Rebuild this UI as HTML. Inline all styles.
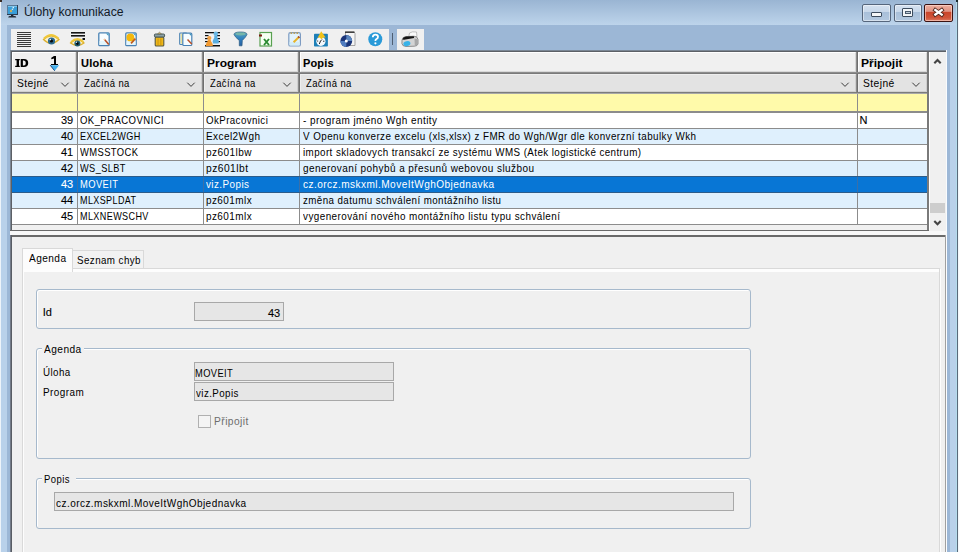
<!DOCTYPE html>
<html><head><meta charset="utf-8">
<style>
*{margin:0;padding:0;box-sizing:border-box}
html,body{width:959px;height:552px;overflow:hidden;background:#b9d1ea;font-family:"Liberation Sans",sans-serif;font-size:11px;color:#000}
.a{position:absolute}
.t{position:absolute;white-space:nowrap;line-height:11px;height:11px;-webkit-text-stroke:0.1px currentColor}
svg{position:absolute;overflow:visible}
</style></head><body>
<div class="a" style="left:0px;top:0px;width:959px;height:552px;background:#b9d1ea"></div>
<div class="a" style="left:0px;top:0px;width:959px;height:25px;background:linear-gradient(#9ab5d3,#bdd4eb)"></div>
<div class="a" style="left:0px;top:0px;width:1px;height:552px;background:#eef4fa"></div>
<div class="a" style="left:957px;top:0px;width:1px;height:552px;background:#5a6a7a"></div>
<div class="a" style="left:958px;top:0px;width:1px;height:552px;background:#f4f8fc"></div>
<div class="a" style="left:956px;top:0px;width:1px;height:552px;background:#b4dcec"></div>
<div class="a" style="left:0px;top:0px;width:2px;height:2px;background:#3a2c24"></div>
<div class="a" style="left:956px;top:0px;width:2px;height:2px;background:#1a2a30"></div>
<svg style="left:0;top:0" width="30" height="25"><rect x="7" y="5" width="11" height="10" fill="#2c3e52"/><rect x="7" y="5" width="10" height="9" fill="#5a7a98"/><rect x="8" y="6" width="9" height="8" fill="#3a9ed8"/><rect x="8" y="6" width="9" height="1" fill="#7cc4ec"/><circle cx="13.3" cy="7.6" r=".8" fill="#e8f4fa"/><circle cx="12.4" cy="9.2" r=".8" fill="#d8ecf4"/><circle cx="11" cy="11" r="1.2" fill="#c8b060"/><rect x="11" y="15" width="2.4" height="1.2" fill="#1e2630"/><path d="M8.2 17.4 Q8.5 16 10 16 H14.5 Q16 16 16.3 17.4 Z" fill="#252d38"/></svg>
<div class="t" style="left:24.2px;top:7px;font-size:12px;color:#121a28;letter-spacing:0.000px;transform:scaleX(1.0148);transform-origin:0 0;-webkit-text-stroke:0px currentColor;-webkit-text-stroke:0">Úlohy komunikace</div>
<div class="a" style="left:862px;top:4px;width:29px;height:18px;border:1px solid #56667c;border-radius:2px;background:linear-gradient(#d6e2f0 0,#c8d8ea 42%,#a8bfd9 43%,#b4c9e0 100%);box-shadow:inset 0 0 0 1px rgba(255,255,255,.45)"></div>
<div class="a" style="left:894px;top:4px;width:28px;height:18px;border:1px solid #56667c;border-radius:2px;background:linear-gradient(#d6e2f0 0,#c8d8ea 42%,#a8bfd9 43%,#b4c9e0 100%);box-shadow:inset 0 0 0 1px rgba(255,255,255,.45)"></div>
<div class="a" style="left:924px;top:4px;width:29px;height:18px;border:1px solid #3a1212;border-radius:2px;background:linear-gradient(#eeb0a0 0,#e09282 40%,#c9442a 44%,#d0553a 80%,#dc7a62 100%);box-shadow:inset 0 0 0 1px rgba(255,220,210,.6)"></div>
<div class="a" style="left:871px;top:12px;width:11px;height:5px;background:#f4f6f8;border:1px solid #3d4c5e;border-radius:1px"></div>
<div class="a" style="left:902px;top:8px;width:11px;height:9px;background:#f4f6f8;border:1px solid #3d4c5e;border-radius:1px"></div>
<div class="a" style="left:904.5px;top:11px;width:6px;height:3px;background:#c0ccd8;border:1px solid #4a5a6c"></div>
<svg style="left:924px;top:4px" width="29" height="18"><path d="M11.3 6 L17.7 10.6 M17.7 6 L11.3 10.6" stroke="#50261c" stroke-width="4" stroke-linecap="square"/><path d="M11.3 6 L17.7 10.6 M17.7 6 L11.3 10.6" stroke="#fff" stroke-width="2.3" stroke-linecap="square"/></svg>
<div class="a" style="left:7px;top:25px;width:943px;height:527px;background:#9cb7d6"></div>
<div class="a" style="left:11px;top:29px;width:378px;height:21px;background:#f0f0f0"></div>
<div class="a" style="left:392px;top:33px;width:1px;height:12px;background:#4e5e72"></div>
<div class="a" style="left:397px;top:29px;width:27px;height:21px;background:#f0f0f0"></div>
<svg style="left:0;top:0" width="430" height="52" shape-rendering="geometricPrecision">
<defs>
<linearGradient id="gfun" x1="0" y1="0" x2="0" y2="1"><stop offset="0" stop-color="#5aa8b8"/><stop offset=".5" stop-color="#2f7fc0"/><stop offset="1" stop-color="#2a5fa0"/></linearGradient>
<radialGradient id="gcd" cx=".5" cy=".5" r=".5"><stop offset="0" stop-color="#fff"/><stop offset=".25" stop-color="#fff"/><stop offset=".3" stop-color="#1c3c8c"/><stop offset="1" stop-color="#142a66"/></radialGradient>
</defs>
<!-- 1 lines -->
<g fill="#3a3a3a">
<rect x="17" y="32" width="14" height="1"/><rect x="17" y="34" width="14" height="1"/><rect x="17" y="36" width="14" height="1"/><rect x="17" y="38" width="14" height="1"/>
<rect x="17" y="40" width="14" height="1"/><rect x="17" y="42" width="14" height="1"/><rect x="17" y="44" width="14" height="1"/><rect x="17" y="46" width="14" height="1"/>
</g>
<!-- 2 eye -->
<g>
<path d="M43.5 39.5 Q51 32 59 39.5 Q51 47 43.5 39.5 Z" fill="#fbf3d0" stroke="#dcb030" stroke-width="1.3"/>
<path d="M44 38.5 Q51 31.5 58.5 38.5" fill="none" stroke="#f0c83a" stroke-width="2"/>
<circle cx="51.5" cy="41" r="3.6" fill="#2d6a8e"/>
<circle cx="51.5" cy="41" r="1.6" fill="#0a0a0a"/>
<circle cx="50.3" cy="39.6" r=".8" fill="#e0f0ff"/>
</g>
<!-- 3 eye + lines -->
<g>
<rect x="71" y="32" width="14" height="1.6" fill="#151515"/>
<rect x="71" y="35" width="14" height="1.6" fill="#151515"/>
<rect x="82.5" y="38" width="2.5" height="2" fill="#151515"/>
<path d="M70.5 43 Q77.5 36.5 84 43 Q77.5 48 70.5 43 Z" fill="#fbf3d0" stroke="#dcb030" stroke-width="1.2"/>
<path d="M71 41.8 Q77.5 36 83.5 41.8" fill="none" stroke="#f0c83a" stroke-width="1.8"/>
<circle cx="77.4" cy="43.6" r="3" fill="#1f5a6e"/>
<circle cx="77.4" cy="43.6" r="1.3" fill="#050505"/>
<circle cx="76.4" cy="42.3" r=".7" fill="#e0f0ff"/>
</g>
<!-- 4 doc pencil -->
<g>
<rect x="98.8" y="32.8" width="10.4" height="12.9" rx="1" fill="#f8fdff" stroke="#4a82b4" stroke-width="1.3"/>
<path d="M99.5 41 H108.5 V45 H99.5 Z" fill="#e4f6fc"/>
<path d="M106 33.5 H108.5 V36 Z" fill="#3a98c0"/>
<path d="M104.3 39.3 L108.8 44.6" stroke="#b85028" stroke-width="1.6"/>
<path d="M104 39 L105 40.1" stroke="#f0c8a0" stroke-width="1.6"/>
</g>
<!-- 5 doc yellow -->
<g>
<rect x="125.8" y="32.8" width="10.4" height="12.9" rx="1" fill="#f8fdff" stroke="#4a82b4" stroke-width="1.3"/>
<path d="M126.5 41 H135.5 V45 H126.5 Z" fill="#e4f6fc"/>
<circle cx="130.4" cy="37.4" r="3.9" fill="#f4b80c"/>
<path d="M133 33.5 H135.5 V36 Z" fill="#3a98c0"/>
<path d="M135.4 38.6 L131 43.4" stroke="#c05a1c" stroke-width="1.7"/>
</g>
<!-- 6 trash -->
<g>
<rect x="155.2" y="37" width="8.6" height="9" rx="1" fill="#efb818" stroke="#5a5a40" stroke-width="1.1"/>
<rect x="154.4" y="34" width="10.2" height="3" rx="1" fill="#8aa0a4" stroke="#4a5a5a" stroke-width="1"/>
<path d="M157.5 34 L159.5 32.2 L161.5 34 Z" fill="#c8b070" stroke="#6a6a50" stroke-width=".6"/>
<rect x="157.6" y="38.5" width=".9" height="6.5" fill="#c89010"/><rect x="160.4" y="38.5" width=".9" height="6.5" fill="#c89010"/>
</g>
<!-- 7 doc copy -->
<g>
<rect x="179.7" y="33" width="7" height="11.5" rx=".8" fill="#f4f6e0" stroke="#4a82b4" stroke-width="1.1"/>
<rect x="181" y="34" width="1" height="9.5" fill="#e8e0a0"/>
<rect x="182.8" y="33.2" width="9" height="12.3" rx="1" fill="#f6fcff" stroke="#4a82b4" stroke-width="1.2"/>
<path d="M189 33.8 H191.2 V36 Z" fill="#3a98c0"/>
<path d="M187.5 39.5 L191.8 44" stroke="#b85028" stroke-width="1.5"/>
</g>
<!-- 8 sort people -->
<g>
<rect x="205" y="32" width="15" height="1.3" fill="#101010"/>
<rect x="205" y="35" width="3.5" height="1.2" fill="#101010"/><rect x="217" y="35" width="3" height="1.2" fill="#101010"/>
<rect x="205" y="38" width="3.5" height="1.2" fill="#101010"/><rect x="217" y="38" width="3" height="1.2" fill="#101010"/>
<rect x="205" y="41" width="3" height="1.2" fill="#101010"/><rect x="217" y="41" width="3" height="1.2" fill="#101010"/>
<rect x="205" y="45" width="15" height="1.5" fill="#101010"/>
<circle cx="215.8" cy="33.8" r="2.3" fill="#6ab8e4"/>
<path d="M214.2 35.8 H217.4 Q216.8 37.5 218 39 Q219.5 41 218.6 43.5 H212.9 Q212 41 213.6 39 Q214.8 37.5 214.2 35.8 Z" fill="#5aaee0"/>
<circle cx="209.3" cy="38" r="2.1" fill="#f5a040"/>
<path d="M207.8 39.8 H210.8 Q210.5 41 211.8 42.5 Q213.2 44 212.8 46 H205.8 Q205.4 44 206.8 42.5 Q208.1 41 207.8 39.8 Z" fill="#f39a30"/>
</g>
<!-- 9 funnel -->
<path d="M234 34.5 Q234 32 240.5 32 Q247 32 247 34.5 Q246 37 242.3 40.5 L242 45.8 L239.3 45.8 L239.3 40.5 Q235 37 234 34.5 Z" fill="url(#gfun)" stroke="#2a5a80" stroke-width=".7"/>
<ellipse cx="240.5" cy="34" rx="5" ry="1.4" fill="#7ab8a8" opacity=".9"/>
<!-- 10 excel -->
<g>
<rect x="260" y="32.5" width="11.5" height="13.5" fill="#f6fff2" stroke="#58a050" stroke-width="1.2"/>
<rect x="259" y="34.5" width="3" height="2" fill="#7a1a10"/>
<path d="M264 39 L269 45 M269 39 L264 45" stroke="#2a8a30" stroke-width="1.9"/>
</g>
<!-- 11 notepad -->
<g>
<rect x="288.8" y="32.6" width="11.6" height="13.4" rx="1.6" fill="#e2f2fb" stroke="#7e9cc2" stroke-width="1.2"/>
<rect x="289.5" y="42" width="10.2" height="3.4" fill="#d2ecf8"/>
<rect x="290.5" y="32.2" width="1.6" height="1.8" fill="#b8a060"/><rect x="293.5" y="32.2" width="1.6" height="1.8" fill="#b8a060"/><rect x="296.5" y="32.2" width="1.6" height="1.8" fill="#b8a060"/>
<path d="M299.2 36.7 L293.6 42.2" stroke="#e8b428" stroke-width="2"/>
<path d="M299.3 36.6 L298.3 37.6" stroke="#9a3a28" stroke-width="2"/>
</g>
<!-- 12 clock -->
<g>
<rect x="314" y="33.8" width="13.9" height="12.7" rx=".8" fill="#1e80b8"/>
<circle cx="320.9" cy="41.3" r="4.6" fill="#f4f8fc"/>
<path d="M320.5 41 L319.3 44 M320.5 41 L322 39.5" stroke="#222" stroke-width="1"/>
<rect x="317" y="40.6" width="1.2" height=".9" fill="#333"/><rect x="323.3" y="40.6" width="1" height="1.4" fill="#333"/>
<path d="M321.2 31.2 L325.7 37.5 L323.2 37.5 L321.5 39.3 L319.5 37.5 L317.6 37.7 Z" fill="#f2c21a"/>
</g>
<!-- 13 cd -->
<g>
<path d="M345.5 32 H354 L355 33.5 V45.5 H345.5 Z" fill="#f4f4f4" stroke="#909090" stroke-width=".8"/>
<rect x="345" y="31.5" width="9.5" height="1.4" fill="#303030"/>
<circle cx="346.3" cy="41" r="5.9" fill="#1a3478"/>
<path d="M346.3 41 L346.3 35.1 A5.9 5.9 0 0 1 352.2 41 Z" fill="#5a86c0"/>
<path d="M346.3 41 L346.3 46.9 A5.9 5.9 0 0 1 340.4 41 Z" fill="#4f7cc0"/>
<circle cx="346.3" cy="41" r="1.5" fill="#fff"/>
</g>
<!-- 14 help -->
<g>
<circle cx="375.3" cy="39.2" r="7" fill="#2a9ad8"/>
<path d="M372.8 37.2 Q372.8 34.6 375.4 34.6 Q378 34.6 378 37 Q378 38.4 376.2 39.3 Q375.4 39.8 375.4 41" fill="none" stroke="#fff" stroke-width="1.8"/>
<circle cx="375.4" cy="43.3" r="1.1" fill="#fff"/>
</g>
<!-- 15 printer -->
<g>
<path d="M408.8 36.5 L409.5 33 Q412 31.2 416.5 32 L417 36.5 Z" fill="#fafafa" stroke="#9a9a9a" stroke-width=".6"/>
<path d="M402 40 Q402.5 37 405.5 36.6 L414 36.2 Q417.6 36.4 418 39.5 L418 44 Q417.5 46 414.5 46.2 L406 46.5 Q402.2 46.3 401.9 43.5 Z" fill="#d4d4d4" stroke="#6a6a6a" stroke-width=".7"/>
<path d="M402.3 39.5 Q403 37 406 36.6 L413.8 36.3 L414.2 38 L404 39.8 Z" fill="#141414"/>
<path d="M414.5 38.5 Q417.5 38.5 417.8 40 L417.8 44 Q417.3 45.6 414.8 45.8 Z" fill="#a8a8a8"/>
<ellipse cx="406.9" cy="43.6" rx="3.6" ry="2.4" transform="rotate(-15 406.9 43.6)" fill="#38b2e8"/>
</g>
</svg>
<div class="a" style="left:10px;top:50px;width:937px;height:181px;background:#f0f0f0"></div>
<div class="a" style="left:10px;top:50px;width:937px;height:1px;background:#7a8694"></div>
<div class="a" style="left:11px;top:51px;width:935px;height:1px;background:#5c6066"></div>
<div class="a" style="left:10px;top:50px;width:1px;height:181px;background:#7a8694"></div>
<div class="a" style="left:11px;top:51px;width:1px;height:180px;background:#5c6066"></div>
<div class="a" style="left:946px;top:50px;width:1px;height:181px;background:#6a6a6a"></div>
<div class="a" style="left:12px;top:52px;width:64px;height:20px;background:#f0f0f0;border-top:1px solid #fff;border-left:1px solid #fff;border-right:1px solid #d6d6d6;border-bottom:1px solid #d8d8d8"></div>
<div class="a" style="left:12px;top:74px;width:64px;height:18px;background:#e3e3e3;border-top:1px solid #eeeeee;border-left:1px solid #eeeeee;border-right:1px solid #cfcfcf;border-bottom:1px solid #d0d0d0"></div>
<div class="a" style="left:76px;top:52px;width:1px;height:42px;background:#8c8c8c"></div>
<div class="a" style="left:77px;top:52px;width:1px;height:42px;background:#6e6e6e"></div>
<div class="a" style="left:78px;top:52px;width:124px;height:20px;background:#f0f0f0;border-top:1px solid #fff;border-left:1px solid #fff;border-right:1px solid #d6d6d6;border-bottom:1px solid #d8d8d8"></div>
<div class="a" style="left:78px;top:74px;width:124px;height:18px;background:#e3e3e3;border-top:1px solid #eeeeee;border-left:1px solid #eeeeee;border-right:1px solid #cfcfcf;border-bottom:1px solid #d0d0d0"></div>
<div class="a" style="left:202px;top:52px;width:1px;height:42px;background:#8c8c8c"></div>
<div class="a" style="left:203px;top:52px;width:1px;height:42px;background:#6e6e6e"></div>
<div class="a" style="left:204px;top:52px;width:94px;height:20px;background:#f0f0f0;border-top:1px solid #fff;border-left:1px solid #fff;border-right:1px solid #d6d6d6;border-bottom:1px solid #d8d8d8"></div>
<div class="a" style="left:204px;top:74px;width:94px;height:18px;background:#e3e3e3;border-top:1px solid #eeeeee;border-left:1px solid #eeeeee;border-right:1px solid #cfcfcf;border-bottom:1px solid #d0d0d0"></div>
<div class="a" style="left:298px;top:52px;width:1px;height:42px;background:#8c8c8c"></div>
<div class="a" style="left:299px;top:52px;width:1px;height:42px;background:#6e6e6e"></div>
<div class="a" style="left:300px;top:52px;width:556px;height:20px;background:#f0f0f0;border-top:1px solid #fff;border-left:1px solid #fff;border-right:1px solid #d6d6d6;border-bottom:1px solid #d8d8d8"></div>
<div class="a" style="left:300px;top:74px;width:556px;height:18px;background:#e3e3e3;border-top:1px solid #eeeeee;border-left:1px solid #eeeeee;border-right:1px solid #cfcfcf;border-bottom:1px solid #d0d0d0"></div>
<div class="a" style="left:856px;top:52px;width:1px;height:42px;background:#8c8c8c"></div>
<div class="a" style="left:857px;top:52px;width:1px;height:42px;background:#6e6e6e"></div>
<div class="a" style="left:858px;top:52px;width:69px;height:20px;background:#f0f0f0;border-top:1px solid #fff;border-left:1px solid #fff;border-right:1px solid #d6d6d6;border-bottom:1px solid #d8d8d8"></div>
<div class="a" style="left:858px;top:74px;width:69px;height:18px;background:#e3e3e3;border-top:1px solid #eeeeee;border-left:1px solid #eeeeee;border-right:1px solid #cfcfcf;border-bottom:1px solid #d0d0d0"></div>
<div class="a" style="left:927px;top:52px;width:1px;height:42px;background:#8c8c8c"></div>
<div class="a" style="left:928px;top:52px;width:1px;height:42px;background:#6e6e6e"></div>
<div class="a" style="left:12px;top:72px;width:917px;height:1px;background:#8c8c8c"></div>
<div class="a" style="left:12px;top:73px;width:917px;height:1px;background:#7a7a7a"></div>
<div class="a" style="left:12px;top:92px;width:917px;height:1px;background:#7c7c7c"></div>
<div class="a" style="left:12px;top:93px;width:917px;height:1px;background:#a8a8a8"></div>
<div class="a" style="left:12px;top:94px;width:915px;height:17px;background:#fffaaa"></div>
<div class="a" style="left:77px;top:94px;width:1px;height:17px;background:#8c8c8c"></div>
<div class="a" style="left:203px;top:94px;width:1px;height:17px;background:#8c8c8c"></div>
<div class="a" style="left:299px;top:94px;width:1px;height:17px;background:#8c8c8c"></div>
<div class="a" style="left:857px;top:94px;width:1px;height:17px;background:#8c8c8c"></div>
<div class="a" style="left:928px;top:94px;width:1px;height:17px;background:#8c8c8c"></div>
<div class="a" style="left:12px;top:111px;width:917px;height:2px;background:#8c8c8c"></div>
<div class="a" style="left:12px;top:113px;width:915px;height:15px;background:#ffffff"></div>
<div class="a" style="left:77px;top:113px;width:1px;height:15px;background:#8c8c8c"></div>
<div class="a" style="left:203px;top:113px;width:1px;height:15px;background:#8c8c8c"></div>
<div class="a" style="left:299px;top:113px;width:1px;height:15px;background:#8c8c8c"></div>
<div class="a" style="left:857px;top:113px;width:1px;height:15px;background:#8c8c8c"></div>
<div class="a" style="left:928px;top:113px;width:1px;height:15px;background:#8c8c8c"></div>
<div class="a" style="left:12px;top:128px;width:915px;height:1px;background:#8c8c8c"></div>
<div class="t" style="left:61px;top:115px;font-size:11px;color:#000;">39</div>
<div class="t" style="left:80px;top:115.0px;font-size:11.5px;color:#000;letter-spacing:0.500px;transform:scaleX(0.8312);transform-origin:0 0;-webkit-text-stroke:0px currentColor;">OK_PRACOVNICI</div>
<div class="t" style="left:206px;top:115.0px;font-size:11.5px;color:#000;letter-spacing:0.500px;transform:scaleX(0.8438);transform-origin:0 0;-webkit-text-stroke:0px currentColor;">OkPracovnici</div>
<div class="t" style="left:303px;top:115.0px;font-size:11.5px;color:#000;letter-spacing:0.500px;transform:scaleX(0.8680);transform-origin:0 0;-webkit-text-stroke:0px currentColor;">- program jméno Wgh entity</div>
<div class="t" style="left:859.5px;top:115px;font-size:11px;color:#000;">N</div>
<div class="a" style="left:12px;top:129px;width:915px;height:15px;background:#dff0fd"></div>
<div class="a" style="left:77px;top:129px;width:1px;height:15px;background:#8c8c8c"></div>
<div class="a" style="left:203px;top:129px;width:1px;height:15px;background:#8c8c8c"></div>
<div class="a" style="left:299px;top:129px;width:1px;height:15px;background:#8c8c8c"></div>
<div class="a" style="left:857px;top:129px;width:1px;height:15px;background:#8c8c8c"></div>
<div class="a" style="left:928px;top:129px;width:1px;height:15px;background:#8c8c8c"></div>
<div class="a" style="left:12px;top:144px;width:915px;height:1px;background:#8c8c8c"></div>
<div class="t" style="left:61px;top:131px;font-size:11px;color:#000;">40</div>
<div class="t" style="left:80px;top:131.0px;font-size:11.5px;color:#000;letter-spacing:0.500px;transform:scaleX(0.7925);transform-origin:0 0;-webkit-text-stroke:0px currentColor;">EXCEL2WGH</div>
<div class="t" style="left:206px;top:131.0px;font-size:11.5px;color:#000;letter-spacing:0.500px;transform:scaleX(0.8687);transform-origin:0 0;-webkit-text-stroke:0px currentColor;">Excel2Wgh</div>
<div class="t" style="left:303px;top:131.0px;font-size:11.5px;color:#000;letter-spacing:0.500px;transform:scaleX(0.8559);transform-origin:0 0;-webkit-text-stroke:0px currentColor;">V Openu konverze excelu (xls,xlsx) z FMR do Wgh/Wgr dle konverzní tabulky Wkh</div>
<div class="a" style="left:12px;top:145px;width:915px;height:15px;background:#ffffff"></div>
<div class="a" style="left:77px;top:145px;width:1px;height:15px;background:#8c8c8c"></div>
<div class="a" style="left:203px;top:145px;width:1px;height:15px;background:#8c8c8c"></div>
<div class="a" style="left:299px;top:145px;width:1px;height:15px;background:#8c8c8c"></div>
<div class="a" style="left:857px;top:145px;width:1px;height:15px;background:#8c8c8c"></div>
<div class="a" style="left:928px;top:145px;width:1px;height:15px;background:#8c8c8c"></div>
<div class="a" style="left:12px;top:160px;width:915px;height:1px;background:#8c8c8c"></div>
<div class="t" style="left:61px;top:147px;font-size:11px;color:#000;">41</div>
<div class="t" style="left:80px;top:147.0px;font-size:11.5px;color:#000;letter-spacing:0.500px;transform:scaleX(0.8168);transform-origin:0 0;-webkit-text-stroke:0px currentColor;">WMSSTOCK</div>
<div class="t" style="left:206px;top:147.0px;font-size:11.5px;color:#000;letter-spacing:0.500px;transform:scaleX(0.8754);transform-origin:0 0;-webkit-text-stroke:0px currentColor;">pz601lbw</div>
<div class="t" style="left:303px;top:147.0px;font-size:11.5px;color:#000;letter-spacing:0.500px;transform:scaleX(0.8511);transform-origin:0 0;-webkit-text-stroke:0px currentColor;">import skladovych transakcí ze systému WMS (Atek logistické centrum)</div>
<div class="a" style="left:12px;top:161px;width:915px;height:15px;background:#dff0fd"></div>
<div class="a" style="left:77px;top:161px;width:1px;height:15px;background:#8c8c8c"></div>
<div class="a" style="left:203px;top:161px;width:1px;height:15px;background:#8c8c8c"></div>
<div class="a" style="left:299px;top:161px;width:1px;height:15px;background:#8c8c8c"></div>
<div class="a" style="left:857px;top:161px;width:1px;height:15px;background:#8c8c8c"></div>
<div class="a" style="left:928px;top:161px;width:1px;height:15px;background:#8c8c8c"></div>
<div class="a" style="left:12px;top:176px;width:915px;height:1px;background:#8c8c8c"></div>
<div class="t" style="left:61px;top:163px;font-size:11px;color:#000;">42</div>
<div class="t" style="left:80px;top:163.0px;font-size:11.5px;color:#000;letter-spacing:0.500px;transform:scaleX(0.8010);transform-origin:0 0;-webkit-text-stroke:0px currentColor;">WS_SLBT</div>
<div class="t" style="left:206px;top:163.0px;font-size:11.5px;color:#000;letter-spacing:0.500px;transform:scaleX(0.8940);transform-origin:0 0;-webkit-text-stroke:0px currentColor;">pz601lbt</div>
<div class="t" style="left:303px;top:163.0px;font-size:11.5px;color:#000;letter-spacing:0.500px;transform:scaleX(0.8688);transform-origin:0 0;-webkit-text-stroke:0px currentColor;">generovaní pohybů a přesunů webovou službou</div>
<div class="a" style="left:12px;top:177px;width:915px;height:15px;background:#0876d5"></div>
<div class="a" style="left:77px;top:177px;width:1px;height:15px;background:#3a6fa8"></div>
<div class="a" style="left:203px;top:177px;width:1px;height:15px;background:#3a6fa8"></div>
<div class="a" style="left:299px;top:177px;width:1px;height:15px;background:#3a6fa8"></div>
<div class="a" style="left:857px;top:177px;width:1px;height:15px;background:#3a6fa8"></div>
<div class="a" style="left:928px;top:177px;width:1px;height:15px;background:#3a6fa8"></div>
<div class="a" style="left:12px;top:192px;width:915px;height:1px;background:#2c5c8a"></div>
<div class="a" style="left:12px;top:176px;width:915px;height:1px;background:#2c5c8a"></div>
<div class="t" style="left:61px;top:179px;font-size:11px;color:#fff;">43</div>
<div class="t" style="left:80px;top:179.0px;font-size:11.5px;color:#fff;letter-spacing:0.500px;transform:scaleX(0.8157);transform-origin:0 0;-webkit-text-stroke:0px currentColor;">MOVEIT</div>
<div class="t" style="left:206px;top:179.0px;font-size:11.5px;color:#fff;letter-spacing:0.500px;transform:scaleX(0.8597);transform-origin:0 0;-webkit-text-stroke:0px currentColor;">viz.Popis</div>
<div class="t" style="left:303px;top:179.0px;font-size:11.5px;color:#fff;letter-spacing:0.500px;transform:scaleX(0.8769);transform-origin:0 0;-webkit-text-stroke:0px currentColor;">cz.orcz.mskxml.MoveItWghObjednavka</div>
<div class="a" style="left:12px;top:193px;width:915px;height:15px;background:#dff0fd"></div>
<div class="a" style="left:77px;top:193px;width:1px;height:15px;background:#8c8c8c"></div>
<div class="a" style="left:203px;top:193px;width:1px;height:15px;background:#8c8c8c"></div>
<div class="a" style="left:299px;top:193px;width:1px;height:15px;background:#8c8c8c"></div>
<div class="a" style="left:857px;top:193px;width:1px;height:15px;background:#8c8c8c"></div>
<div class="a" style="left:928px;top:193px;width:1px;height:15px;background:#8c8c8c"></div>
<div class="a" style="left:12px;top:208px;width:915px;height:1px;background:#8c8c8c"></div>
<div class="t" style="left:61px;top:195px;font-size:11px;color:#000;">44</div>
<div class="t" style="left:80px;top:195.0px;font-size:11.5px;color:#000;letter-spacing:0.500px;transform:scaleX(0.7829);transform-origin:0 0;-webkit-text-stroke:0px currentColor;">MLXSPLDAT</div>
<div class="t" style="left:206px;top:195.0px;font-size:11.5px;color:#000;letter-spacing:0.500px;transform:scaleX(0.8650);transform-origin:0 0;-webkit-text-stroke:0px currentColor;">pz601mlx</div>
<div class="t" style="left:303px;top:195.0px;font-size:11.5px;color:#000;letter-spacing:0.500px;transform:scaleX(0.8469);transform-origin:0 0;-webkit-text-stroke:0px currentColor;">změna datumu schválení montážního listu</div>
<div class="a" style="left:12px;top:209px;width:915px;height:15px;background:#ffffff"></div>
<div class="a" style="left:77px;top:209px;width:1px;height:15px;background:#8c8c8c"></div>
<div class="a" style="left:203px;top:209px;width:1px;height:15px;background:#8c8c8c"></div>
<div class="a" style="left:299px;top:209px;width:1px;height:15px;background:#8c8c8c"></div>
<div class="a" style="left:857px;top:209px;width:1px;height:15px;background:#8c8c8c"></div>
<div class="a" style="left:928px;top:209px;width:1px;height:15px;background:#8c8c8c"></div>
<div class="a" style="left:12px;top:224px;width:915px;height:1px;background:#8c8c8c"></div>
<div class="t" style="left:61px;top:211px;font-size:11px;color:#000;">45</div>
<div class="t" style="left:80px;top:211.0px;font-size:11.5px;color:#000;letter-spacing:0.500px;transform:scaleX(0.7869);transform-origin:0 0;-webkit-text-stroke:0px currentColor;">MLXNEWSCHV</div>
<div class="t" style="left:206px;top:211.0px;font-size:11.5px;color:#000;letter-spacing:0.500px;transform:scaleX(0.8650);transform-origin:0 0;-webkit-text-stroke:0px currentColor;">pz601mlx</div>
<div class="t" style="left:303px;top:211.0px;font-size:11.5px;color:#000;letter-spacing:0.500px;transform:scaleX(0.8606);transform-origin:0 0;-webkit-text-stroke:0px currentColor;">vygenerování nového montážního listu typu schválení</div>
<div class="a" style="left:12px;top:225px;width:915px;height:5px;background:#f0f0f0"></div>
<div class="a" style="left:927px;top:52px;width:2px;height:178px;background:#7a7a7a"></div>
<div class="a" style="left:929px;top:52px;width:1px;height:178px;background:#fff"></div>
<div class="a" style="left:10px;top:230px;width:919px;height:1px;background:#6a6a6a"></div>
<div class="a" style="left:930px;top:52px;width:16px;height:178px;background:#f0f0f0"></div>
<div class="a" style="left:946px;top:50px;width:1px;height:181px;background:#f8fbfe"></div>
<svg style="left:929px;top:52px" width="17" height="178"><path d="M5.3 11.3 L8.5 8.1 L11.7 11.3" fill="none" stroke="#444" stroke-width="2.1"/><path d="M5.3 169 L8.5 172.2 L11.7 169" fill="none" stroke="#444" stroke-width="2.1"/></svg>
<div class="a" style="left:930px;top:203px;width:15px;height:10px;background:#cdcdcd"></div>
<svg style="left:0;top:0" width="40" height="74"><path d="M15.2 59 H19.8 V60.3 H19 V65.7 H19.8 V67 H15.2 V65.7 H16.6 V60.3 H15.2 Z" fill="#000"/><path fill-rule="evenodd" d="M20.7 59 H24 Q28.2 59 28.2 63 Q28.2 67 24 67 H20.7 Z M22.9 60.4 V65.6 H23.9 Q25.8 65.6 25.8 63 Q25.8 60.4 23.9 60.4 Z" fill="#000"/></svg>
<div class="t" style="left:81px;top:58px;font-size:11px;color:#000;font-weight:bold;letter-spacing:0.261px;">Uloha</div>
<div class="t" style="left:207px;top:58px;font-size:11px;color:#000;font-weight:bold;letter-spacing:0.000px;transform:scaleX(1.0899);transform-origin:0 0;-webkit-text-stroke:0px currentColor;">Program</div>
<div class="t" style="left:303px;top:58px;font-size:11px;color:#000;font-weight:bold;letter-spacing:0.138px;">Popis</div>
<div class="t" style="left:861px;top:58px;font-size:11px;color:#000;font-weight:bold;letter-spacing:0.000px;transform:scaleX(1.0980);transform-origin:0 0;-webkit-text-stroke:0px currentColor;">Připojit</div>
<svg style="left:0;top:0" width="70" height="74"><path d="M54 56 H56 V64 H58 V65 H51 V64 H54 V58.6 L51.3 59.2 V57.8 Z" fill="#000"/><path d="M50.2 65.2 H59.2 L54.7 70.8 Z" fill="#45b0ec"/><path d="M50.2 65.2 L54.7 70.8" stroke="#1a4a80" stroke-width="1"/></svg>
<div class="t" style="left:17.1px;top:78.0px;font-size:11.5px;color:#000;letter-spacing:0.500px;transform:scaleX(0.8915);transform-origin:0 0;-webkit-text-stroke:0px currentColor;">Stejné</div>
<svg style="left:61px;top:81px" width="10" height="7"><path d="M0.3 1.7 L4 5.4 L7.7 1.7" fill="none" stroke="#3c3c3c" stroke-width="1"/></svg>
<div class="t" style="left:83.9px;top:78.0px;font-size:11.5px;color:#000;letter-spacing:0.500px;transform:scaleX(0.8215);transform-origin:0 0;-webkit-text-stroke:0px currentColor;">Začíná na</div>
<svg style="left:187px;top:81px" width="10" height="7"><path d="M0.3 1.7 L4 5.4 L7.7 1.7" fill="none" stroke="#3c3c3c" stroke-width="1"/></svg>
<div class="t" style="left:209.9px;top:78.0px;font-size:11.5px;color:#000;letter-spacing:0.500px;transform:scaleX(0.8215);transform-origin:0 0;-webkit-text-stroke:0px currentColor;">Začíná na</div>
<svg style="left:283px;top:81px" width="10" height="7"><path d="M0.3 1.7 L4 5.4 L7.7 1.7" fill="none" stroke="#3c3c3c" stroke-width="1"/></svg>
<div class="t" style="left:305.9px;top:78.0px;font-size:11.5px;color:#000;letter-spacing:0.500px;transform:scaleX(0.8215);transform-origin:0 0;-webkit-text-stroke:0px currentColor;">Začíná na</div>
<svg style="left:841px;top:81px" width="10" height="7"><path d="M0.3 1.7 L4 5.4 L7.7 1.7" fill="none" stroke="#3c3c3c" stroke-width="1"/></svg>
<div class="t" style="left:863.1px;top:78.0px;font-size:11.5px;color:#000;letter-spacing:0.500px;transform:scaleX(0.8915);transform-origin:0 0;-webkit-text-stroke:0px currentColor;">Stejné</div>
<svg style="left:912px;top:81px" width="10" height="7"><path d="M0.3 1.7 L4 5.4 L7.7 1.7" fill="none" stroke="#3c3c3c" stroke-width="1"/></svg>
<div class="a" style="left:10px;top:231px;width:937px;height:4px;background:#f8f8f8"></div>
<div class="a" style="left:10px;top:235px;width:937px;height:317px;background:#f0f0f0"></div>
<div class="a" style="left:10px;top:235px;width:937px;height:2px;background:#6a6a6a"></div>
<div class="a" style="left:10px;top:235px;width:1px;height:317px;background:#727a88"></div>
<div class="a" style="left:11px;top:235px;width:1px;height:317px;background:#585c64"></div>
<div class="a" style="left:945px;top:235px;width:1px;height:317px;background:#a0a0a0"></div>
<div class="a" style="left:946px;top:235px;width:1px;height:317px;background:#fbfdff"></div>
<div class="a" style="left:22px;top:268px;width:918px;height:284px;background:#d9d9d9"></div>
<div class="a" style="left:23px;top:269px;width:916px;height:283px;background:#fdfdfd"></div>
<div class="a" style="left:24px;top:272px;width:915px;height:280px;background:#f0f0f0"></div>
<div class="a" style="left:940px;top:269px;width:1px;height:283px;background:#fdfdfd"></div>
<div class="a" style="left:72px;top:250px;width:72px;height:19px;background:#f2f2f2;border:1px solid #d9d9d9"></div>
<div class="a" style="left:22px;top:248px;width:51px;height:24px;background:#fcfcfc;border:1px solid #d9d9d9;border-bottom:none"></div>
<div class="a" style="left:23px;top:269px;width:49px;height:3px;background:#fdfdfd"></div>
<div class="t" style="left:29px;top:253.0px;font-size:11.5px;color:#000;letter-spacing:0.500px;transform:scaleX(0.8778);transform-origin:0 0;-webkit-text-stroke:0px currentColor;">Agenda</div>
<div class="t" style="left:76.5px;top:255.0px;font-size:11.5px;color:#000;letter-spacing:0.500px;transform:scaleX(0.8504);transform-origin:0 0;-webkit-text-stroke:0px currentColor;">Seznam chyb</div>
<div class="a" style="left:36px;top:289px;width:715px;height:40px;border:1px solid #a6b9cc;border-radius:3px;box-shadow:inset 1px 1px 0 #fff"></div>
<div class="t" style="left:42.8px;top:307px;font-size:11px;color:#000;">Id</div>
<div class="a" style="left:194px;top:302px;width:90px;height:19px;background:#e6e6e6;border:1px solid #a8a8a8"></div>
<div class="t" style="left:268px;top:308px;font-size:11px;color:#000;">43</div>
<div class="a" style="left:36px;top:348px;width:715px;height:111px;border:1px solid #a6b9cc;border-radius:3px;box-shadow:inset 1px 1px 0 #fff"></div>
<div class="a" style="left:42px;top:342px;width:42px;height:12px;background:#f0f0f0"></div>
<div class="t" style="left:44px;top:344.0px;font-size:11.5px;color:#000;letter-spacing:0.500px;transform:scaleX(0.8826);transform-origin:0 0;-webkit-text-stroke:0px currentColor;">Agenda</div>
<div class="t" style="left:42.6px;top:367.0px;font-size:11.5px;color:#000;letter-spacing:0.500px;transform:scaleX(0.8503);transform-origin:0 0;-webkit-text-stroke:0px currentColor;">Úloha</div>
<div class="t" style="left:42.6px;top:387.0px;font-size:11.5px;color:#000;letter-spacing:0.500px;transform:scaleX(0.8631);transform-origin:0 0;-webkit-text-stroke:0px currentColor;">Program</div>
<div class="a" style="left:194px;top:362px;width:200px;height:19px;background:#e6e6e6;border:1px solid #a8a8a8"></div>
<div class="a" style="left:194px;top:382px;width:200px;height:19px;background:#e6e6e6;border:1px solid #a8a8a8"></div>
<div class="t" style="left:195.4px;top:368.0px;font-size:11.5px;color:#000;letter-spacing:0.500px;transform:scaleX(0.8093);transform-origin:0 0;-webkit-text-stroke:0px currentColor;">MOVEIT</div>
<div class="t" style="left:196px;top:388.0px;font-size:11.5px;color:#000;letter-spacing:0.500px;transform:scaleX(0.8477);transform-origin:0 0;-webkit-text-stroke:0px currentColor;">viz.Popis</div>
<div class="a" style="left:198px;top:415px;width:13px;height:13px;background:#f4f4f4;border:1px solid #b0b0b0"></div>
<div class="t" style="left:213.5px;top:416.0px;font-size:11.5px;color:#6d6d6d;letter-spacing:0.500px;transform:scaleX(0.8900);transform-origin:0 0;-webkit-text-stroke:0px currentColor;">Připojit</div>
<div class="a" style="left:36px;top:478px;width:715px;height:51px;border:1px solid #a6b9cc;border-radius:3px;box-shadow:inset 1px 1px 0 #fff"></div>
<div class="a" style="left:42px;top:472px;width:34px;height:12px;background:#f0f0f0"></div>
<div class="t" style="left:43.5px;top:474.0px;font-size:11.5px;color:#000;letter-spacing:0.500px;transform:scaleX(0.8256);transform-origin:0 0;-webkit-text-stroke:0px currentColor;">Popis</div>
<div class="a" style="left:54px;top:492px;width:680px;height:19px;background:#e6e6e6;border:1px solid #a8a8a8"></div>
<div class="t" style="left:56px;top:498.0px;font-size:11.5px;color:#000;letter-spacing:0.500px;transform:scaleX(0.8733);transform-origin:0 0;-webkit-text-stroke:0px currentColor;">cz.orcz.mskxml.MoveItWghObjednavka</div>
</body></html>
